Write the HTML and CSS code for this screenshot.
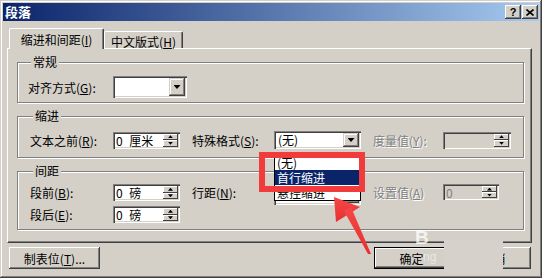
FILE: index.html
```html
<!DOCTYPE html>
<html lang="zh-CN">
<head>
    <meta charset="UTF-8">
    <title>段落</title>
    <link rel="stylesheet" href="styles.css">
</head>
<body>
    <div class="dialog">
        <div class="titlebar">
            <span class="title">段落</span>
            <div class="caption-btns">
                <span class="cap-btn help">?</span>
                <span class="cap-btn close">
                    <svg width="8" height="7" viewBox="0 0 8 7"><path d="M0.5 0.5 L7.5 6.5 M7.5 0.5 L0.5 6.5" stroke="#000" stroke-width="1.6"/></svg>
                </span>
            </div>
        </div>

        <div class="content">
            <div class="tabs">
                <div class="tab active">缩进和间距(<u>I</u>)</div>
                <div class="tab">中文版式(<u>H</u>)</div>
            </div>

            <div class="panel">
                <fieldset class="group general">
                    <legend>常规</legend>
                    <div class="row">
                        <label class="lbl">对齐方式(<u>G</u>):</label>
                        <div class="combo align"><span class="combo-text"></span><span class="drop-btn"><i class="tri"></i></span></div>
                    </div>
                </fieldset>

                <fieldset class="group indent">
                    <legend>缩进</legend>
                    <div class="grid">
                        <label class="lbl">文本之前(<u>R</u>):</label>
                        <div class="spin"><span class="spin-text">0 厘米</span><span class="spin-btns"><span class="sb"><i class="up"></i></span><span class="sb"><i class="down"></i></span></span></div>
                        <label class="lbl">特殊格式(<u>S</u>):</label>
                        <div class="combo special">
                            <span class="combo-text">(无)</span><span class="drop-btn"><i class="tri"></i></span>
                            <ul class="droplist">
                                <li>(无)</li>
                                <li class="sel">首行缩进</li>
                                <li>悬挂缩进</li>
                            </ul>
                        </div>
                        <label class="lbl off">度量值(<u>Y</u>):</label>
                        <div class="spin off measure"><span class="spin-text"></span><span class="spin-btns"><span class="sb"><i class="up"></i></span><span class="sb"><i class="down"></i></span></span></div>
                    </div>
                </fieldset>

                <fieldset class="group spacing">
                    <legend>间距</legend>
                    <div class="grid two">
                        <label class="lbl">段前(<u>B</u>):</label>
                        <div class="spin"><span class="spin-text">0 磅</span><span class="spin-btns"><span class="sb"><i class="up"></i></span><span class="sb"><i class="down"></i></span></span></div>
                        <label class="lbl">行距(<u>N</u>):</label>
                        <div class="combo linesp"><span class="combo-text"></span><span class="drop-btn"><i class="tri"></i></span></div>
                        <label class="lbl off">设置值(<u>A</u>)</label>
                        <div class="spin off setval"><span class="spin-text">0</span><span class="spin-btns"><span class="sb"><i class="up"></i></span><span class="sb"><i class="down"></i></span></span></div>

                        <label class="lbl">段后(<u>E</u>):</label>
                        <div class="spin"><span class="spin-text">0 磅</span><span class="spin-btns"><span class="sb"><i class="up"></i></span><span class="sb"><i class="down"></i></span></span></div>
                    </div>
                </fieldset>
            </div>

            <div class="buttons">
                <button class="btn tabstop">制表位(<u>T</u>)...</button>
                <div class="btn-group">
                    <button class="btn default">确定</button>
                    <button class="btn">取消</button>
                </div>
            </div>
        </div>

        <!-- annotation drawn over the dialog -->
        <div class="mark-box"></div>
        <svg class="mark-arrow" width="50" height="70" viewBox="0 0 50 70">
            <defs>
                <linearGradient id="ar" x1="0" y1="0" x2="0" y2="1">
                    <stop offset="0" stop-color="#f44848"/>
                    <stop offset="1" stop-color="#e83030"/>
                </linearGradient>
            </defs>
            <polygon points="4,7 6,32 30,17" fill="url(#ar)"/>
            <polygon points="14,21 21,17 41,64 38,64" fill="url(#ar)"/>
        </svg>
        <div class="watermark"></div>
        <span class="wm-b">B</span>
        <span class="wm-ng">ng</span>
    </div>
</body>
</html>
```

FILE: styles.css
```css
*{
    box-sizing: border-box;
}

body{
    margin: 0;
    background: #d4d0c8;
    font-family: "Noto Sans CJK SC", "Liberation Sans", sans-serif;
    font-size: 12px;
    color: #000;
}

u{
    text-decoration: underline;
}

.dialog{
    position: relative;
    width: 542px;
    height: 278px;
    padding: 3px;
    background: #d4d0c8;
    box-shadow: inset -1px -1px #404040, inset 1px 1px #d4d0c8, inset -2px -2px #808080, inset 2px 2px #fff;
    display: flex;
    flex-direction: column;
}

/* title bar */
.titlebar{
    height: 18px;
    background: linear-gradient(to right, #0a246a, #a6caf0);
    display: flex;
    align-items: center;
    justify-content: space-between;
    padding: 0 1px 0 2px;
}
.title{
    color: #fff;
    font-weight: bold;
    font-size: 13px;
    line-height: 18px;
}
.caption-btns{
    display: flex;
}
.cap-btn{
    width: 16px;
    height: 14px;
    background: #d4d0c8;
    box-shadow: inset -1px -1px #404040, inset 1px 1px #fff, inset -2px -2px #808080;
    display: flex;
    align-items: center;
    justify-content: center;
}
.help{
    margin-right: 1px;
    font: bold 11px "Liberation Sans", sans-serif;
    padding-bottom: 1px;
}

/* tabs + panel */
.content{
    flex: 1;
    display: flex;
    flex-direction: column;
    padding: 7px 7px 0 4px;
}
.tabs{
    display: flex;
    align-items: flex-end;
    height: 21px;
    padding-left: 2px;
    margin-bottom: -1px;
    position: relative;
    z-index: 1;
}
.tab{
    height: 17px;
    margin-bottom: 1px;
    border-top: 1px solid #fff;
    border-left: 1px solid #fff;
    border-right: 1px solid #404040;
    border-radius: 2px 2px 0 0;
    box-shadow: inset -1px 0 #808080;
    background: #d4d0c8;
    display: flex;
    align-items: center;
    justify-content: center;
    padding-top: 2px;
    width: 79px;
}
.tab.active{
    height: 21px;
    margin-bottom: 0;
    width: 95px;
    padding-top: 0;
}

.panel{
    height: 195px;
    border: 1px solid;
    border-color: #fff #404040 #404040 #fff;
    box-shadow: inset -1px -1px #808080;
    padding: 6px 7px 0 9px;
}

.group{
    margin: 0;
    padding: 0;
    min-width: 0;
    border: 1px solid #808080;
    box-shadow: 1px 1px #fff, inset 1px 1px #fff;
}
.group legend{
    margin-left: 3px;
    padding: 0 2px;
    line-height: 14px;
    background: #d4d0c8;
}
.general{
    padding: 7px 0 4px 10px;
}
.indent{
    margin-top: 6px;
    padding: 8px 0 8px 12px;
}
.spacing{
    margin-top: 6px;
    padding: 6px 0 6px 12px;
}

.row{
    display: flex;
    align-items: center;
}
.row .lbl{
    width: 85px;
}
.grid{
    display: grid;
    grid-template-columns: 83px 79px 82px 99px 70px auto;
    align-items: center;
}
.grid.two{
    grid-template-rows: 17px 17px;
    row-gap: 5px;
    align-items: start;
}
.lbl{
    line-height: 17px;
    white-space: nowrap;
}
.lbl.off{
    color: #808080;
    text-shadow: 1px 1px #fff;
}

/* sunken controls */
.combo, .spin{
    position: relative;
    display: flex;
    background: #fff;
    box-shadow: inset 1px 1px #808080, inset 2px 2px #404040, inset -1px -1px #fff, inset -2px -2px #d4d0c8;
    padding: 2px;
}
.combo{
    height: 22px;
}
.combo.align{
    width: 74px;
}
.combo.special, .combo.linesp{
    width: 87px;
    height: 18px;
}
.combo.linesp{
    margin-top: 3px;
}
.combo-text{
    flex: 1;
    padding-left: 2px;
    line-height: 14px;
}
.combo.align .combo-text{
    line-height: 18px;
}
.drop-btn{
    width: 16px;
    background: #d4d0c8;
    box-shadow: inset -1px -1px #404040, inset 1px 1px #d4d0c8, inset -2px -2px #808080, inset 2px 2px #fff;
    display: flex;
    align-items: center;
    justify-content: center;
}
.tri{
    width: 7px;
    height: 4px;
    background: #000;
    clip-path: polygon(0 0, 100% 0, 50% 100%);
}

.spin{
    width: 67px;
    height: 17px;
}
.spin.measure{
    width: 68px;
}
.spin.setval{
    width: 56px;
    height: 16px;
}
.spin.off{
    background: #d4d0c8;
    color: #808080;
}
.spin-text{
    flex: 1;
    padding-left: 1px;
    line-height: 13px;
    white-space: nowrap;
    word-spacing: 4px;
}
.spin-btns{
    width: 15px;
    display: flex;
    flex-direction: column;
}
.sb{
    flex: 1;
    background: #d4d0c8;
    box-shadow: inset -1px -1px #404040, inset 1px 1px #fff;
    display: flex;
    align-items: center;
    justify-content: center;
}
.sb i{
    width: 5px;
    height: 3px;
    background: #000;
}
.sb .up{
    clip-path: polygon(50% 0, 100% 100%, 0 100%);
}
.sb .down{
    clip-path: polygon(0 0, 100% 0, 50% 100%);
}

/* open dropdown of the special indent combo */
.droplist{
    position: absolute;
    left: 0;
    top: calc(100% + 5px);
    width: 87px;
    margin: 0;
    padding: 0;
    list-style: none;
    background: #fff;
    border: 1px solid #000;
    z-index: 5;
}
.droplist li{
    height: 15px;
    line-height: 15px;
    padding-left: 2px;
}
.droplist li.sel{
    background: #0a246a;
    color: #fff;
}

/* bottom buttons */
.buttons{
    margin-top: 4px;
    display: flex;
    justify-content: space-between;
    padding-left: 2px;
    padding-right: 1px;
}
.btn-group{
    display: flex;
    gap: 7px;
}
.btn{
    height: 22px;
    width: 75px;
    padding: 0;
    border: none;
    font: inherit;
    font-size: 12px;
    background: #d4d0c8;
    box-shadow: inset -1px -1px #404040, inset 1px 1px #fff, inset -2px -2px #808080, inset 2px 2px #d4d0c8;
}
.btn.tabstop{
    width: 91px;
}
.btn.default{
    border: 1px solid #000;
}

/* annotation overlays */
.mark-box{
    position: absolute;
    left: 259px;
    top: 152px;
    width: 106px;
    height: 40px;
    border: 6px solid #f23c3c;
    z-index: 10;
}
.mark-arrow{
    position: absolute;
    left: 330px;
    top: 190px;
    z-index: 10;
}
.watermark{
    position: absolute;
    left: 444px;
    top: 240px;
    width: 59px;
    height: 33px;
    background: #d6d2cb;
    z-index: 8;
}
.wm-b{
    position: absolute;
    left: 415px;
    top: 227px;
    font: bold 19px "Liberation Sans", sans-serif;
    color: rgba(255, 255, 255, 0.75);
    z-index: 9;
}
.wm-ng{
    position: absolute;
    left: 423px;
    top: 250px;
    font: 12px "Liberation Sans", sans-serif;
    color: rgba(255, 255, 255, 0.5);
    z-index: 9;
}
```
